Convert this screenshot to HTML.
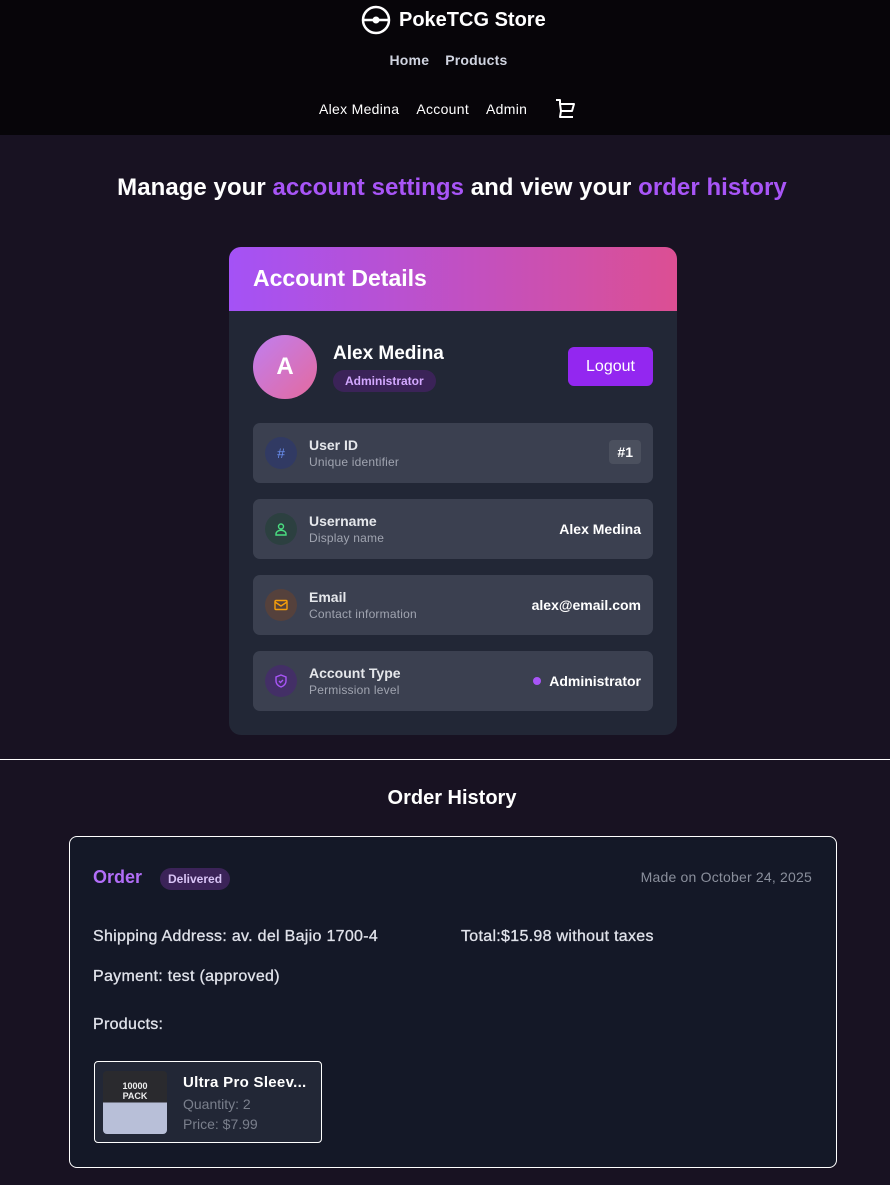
<!DOCTYPE html>
<html><head><meta charset="utf-8"><style>
*{box-sizing:border-box;margin:0;padding:0}
body{width:890px;height:1185px;background:#181222;font-family:"Liberation Sans",sans-serif;color:#fff;overflow:hidden;position:relative}
.hdr{position:absolute;left:0;top:0;width:890px;height:135px;background:#070509}
.abs{position:absolute}
.logo{left:361px;top:5px;font-size:20px;font-weight:bold;display:flex;align-items:center;gap:8px}
.nav1{top:52px;left:0;width:890px;text-align:center;font-size:14px;font-weight:bold;color:#d0d4e0;letter-spacing:0.2px}
.nav1 span{margin:0 7px}
.nav2{top:98px;left:319px;font-size:14px;color:#fff;display:flex;gap:17px;align-items:center;letter-spacing:0.3px}
h1{position:absolute;top:174px;left:7px;width:890px;text-align:center;font-size:24px;font-weight:bold;letter-spacing:0.05px}
.p{color:#a855f7}
.card{position:absolute;left:229px;top:247px;width:448px;height:488px;background:#222736;border-radius:12px;overflow:hidden}
.ch{height:64px;background:linear-gradient(90deg,#a452f6,#dc4f93);padding:18px 24px;font-size:23px;font-weight:bold}
.av{position:absolute;left:24px;top:88px;width:64px;height:64px;border-radius:50%;background:linear-gradient(135deg,#c07ef0,#e46a9e);text-align:center;line-height:64px;font-size:24px;font-weight:bold}
.nm{left:104px;top:96px;font-size:19px;font-weight:bold}
.badge{left:104px;top:123px;background:#3b2358;color:#d3a8ff;font-size:12px;padding:4px 12px;border-radius:12px;font-weight:bold}
.lo{left:339px;top:100px;width:85px;height:39px;background:#9327f0;border-radius:6px;text-align:center;line-height:39px;font-size:16px}
.row{position:absolute;left:24px;width:400px;height:60px;background:#3b4050;border-radius:7px}
.ic{position:absolute;left:12px;top:14px;width:32px;height:32px;border-radius:50%;display:flex;align-items:center;justify-content:center;font-size:14px}
.t1{position:absolute;left:56px;top:14px;font-size:14px;font-weight:bold;color:#e5e7eb}
.t2{position:absolute;left:56px;top:32px;font-size:12px;color:#a0a4b0;letter-spacing:0.2px}
.v{position:absolute;right:12px;top:22px;font-size:14px;font-weight:bold}
.line{position:absolute;left:0;top:759px;width:890px;height:1px;background:#fff}
.oh{top:787px;left:7px;width:890px;text-align:center;font-size:20px;font-weight:bold}
.oc{position:absolute;left:69px;top:836px;width:768px;height:332px;background:#141827;border:1px solid #fff;border-radius:8px}
.ot{font-size:16px;color:#e0e2ea;letter-spacing:0.3px;-webkit-text-stroke:0.3px #e0e2ea}
</style></head><body>
<div class="hdr">
<div class="abs logo"><svg width="30" height="30" viewBox="0 0 30 30"><circle cx="15" cy="15" r="13" fill="none" stroke="#fff" stroke-width="2.5"/><line x1="2" y1="15" x2="28" y2="15" stroke="#fff" stroke-width="2.5"/><circle cx="15" cy="15" r="3.5" fill="#fff"/></svg>PokeTCG Store</div>
<div class="abs nav1"><span style="margin-left:14px">Home</span><span style="margin-left:9px">Products</span></div>
<div class="abs nav2"><span>Alex Medina</span><span>Account</span><span>Admin</span><svg style="margin-left:10px" width="22" height="22" viewBox="0 0 22 22" fill="none" stroke="#fff" stroke-width="2" stroke-linejoin="round"><path d="M2 2h4v4h14l-2 7H7 M6 6l1 7-1 6h13"/></svg></div>
</div>
<h1>Manage your <span class="p">account settings</span> and view your <span class="p">order history</span></h1>
<div class="card">
<div class="ch">Account Details</div>
<div class="av">A</div>
<div class="abs nm">Alex Medina</div>
<div class="abs badge">Administrator</div>
<div class="abs lo">Logout</div>
<div class="row" style="top:176px"><div class="ic" style="background:#313a63;color:#6b8ff0">#</div><div class="t1">User ID</div><div class="t2">Unique identifier</div><div class="v" style="top:17px;background:#4b505e;padding:4px 8px;border-radius:4px">#1</div></div>
<div class="row" style="top:252px"><div class="ic" style="background:#2c4040"><svg width="14" height="14" viewBox="0 0 14 14" fill="none" stroke="#4ade80" stroke-width="1.4"><circle cx="7" cy="4.5" r="2.5"/><path d="M2 13v-1a4 3 0 0 1 10 0v1z"/></svg></div><div class="t1">Username</div><div class="t2">Display name</div><div class="v">Alex Medina</div></div>
<div class="row" style="top:328px"><div class="ic" style="background:#55413c"><svg width="14" height="12" viewBox="0 0 14 12" fill="none" stroke="#f59e0b" stroke-width="1.4"><rect x="1" y="1.5" width="12" height="9" rx="1"/><path d="M1 3l6 4 6-4"/></svg></div><div class="t1">Email</div><div class="t2">Contact information</div><div class="v">alex@email.com</div></div>
<div class="row" style="top:404px"><div class="ic" style="background:#432f66"><svg width="14" height="14" viewBox="0 0 14 14" fill="none" stroke="#a855f7" stroke-width="1.4"><path d="M7 1l5 2v4c0 3-2.5 5-5 6-2.5-1-5-3-5-6V3z"/><path d="M5 7l1.5 1.5L9 6"/></svg></div><div class="t1">Account Type</div><div class="t2">Permission level</div><div class="v"><span style="display:inline-block;width:8px;height:8px;border-radius:50%;background:#a855f7;margin-right:8px;vertical-align:1px"></span>Administrator</div></div>
</div>
<div class="line"></div>
<div class="abs oh">Order History</div>
<div class="oc">
<div class="abs" style="left:23px;top:30px;font-size:18px;font-weight:bold;color:#b26ef8">Order</div>
<div class="abs" style="left:90px;top:31px;background:#3b2358;color:#d8c3f5;font-size:12px;padding:4px 8px;border-radius:12px;font-weight:bold">Delivered</div>
<div class="abs" style="right:24px;top:32px;font-size:14px;color:#8a8f9c;letter-spacing:0.2px">Made on October 24, 2025</div>
<div class="abs ot" style="left:23px;top:91px">Shipping Address: av. del Bajio 1700-4</div>
<div class="abs ot" style="left:391px;top:91px">Total:$15.98 without taxes</div>
<div class="abs ot" style="left:23px;top:131px">Payment: test (approved)</div>
<div class="abs ot" style="left:23px;top:179px">Products:</div>
<div class="abs" style="left:24px;top:224px;width:228px;height:82px;background:#222736;border:1px solid #fff;border-radius:4px">
<div class="abs" style="left:8px;top:9px;width:64px;height:63px;border-radius:4px;background:linear-gradient(#2a2a2e 0 50%,#b8bfd8 50%)"><div style="font-size:9px;font-weight:bold;text-align:center;margin-top:10px;color:#eee">10000<br>PACK</div></div>
<div class="abs" style="left:88px;top:12px;font-size:15px;font-weight:bold;letter-spacing:0.3px">Ultra Pro Sleev...</div>
<div class="abs" style="left:88px;top:34px;font-size:14px;color:#7a7f8c">Quantity: 2</div>
<div class="abs" style="left:88px;top:54px;font-size:14px;color:#7a7f8c">Price: $7.99</div>
</div>
</div>
</body></html>
